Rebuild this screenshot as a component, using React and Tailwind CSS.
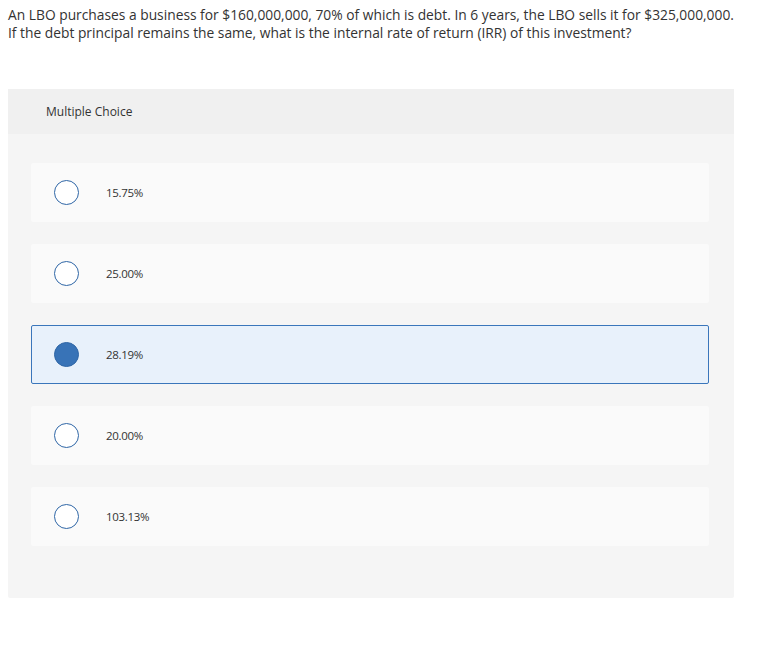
import React from 'react';

const options = [
  { label: '15.75%', selected: false },
  { label: '25.00%', selected: false },
  { label: '28.19%', selected: true },
  { label: '20.00%', selected: false },
  { label: '103.13%', selected: false },
];

function Option({ label, selected }) {
  return (
    <div
      className={
        selected
          ? 'flex items-center h-[59px] rounded-[2px] border border-[#3a76bb] bg-[#e8f1fb]'
          : 'flex items-center h-[59px] rounded-[2px] border border-transparent bg-[#fafafa]'
      }
    >
      {/* Radio */}
      {selected ? (
        <span className="ml-[22px] shrink-0 block w-[25px] h-[25px] rounded-full bg-[#3873b7] border-[1.5px] border-[#2f66a6]" />
      ) : (
        <span className="ml-[22px] shrink-0 block w-[25px] h-[25px] rounded-full bg-white border-[1.5px] border-[#2f66a6]" />
      )}
      <span className="ml-[27px] text-[11.5px] text-[#333] tracking-[-0.3px]">{label}</span>
    </div>
  );
}

export default function App() {
  return (
    <div className="w-[776px] h-[650px] bg-white font-['Open_Sans',sans-serif] text-[#333]">
      {/* Question */}
      <p className="pl-2 pt-[6px] text-[13.8px] leading-[18px] text-[#333]">
        An LBO purchases a business for $160,000,000, 70% of which is debt. In 6 years, the LBO sells it for $325,000,000.
        <br />
        If the debt principal remains the same, what is the internal rate of return (IRR) of this investment?
      </p>

      {/* Answer panel */}
      <div className="ml-2 mt-[47px] w-[726px] h-[509px] bg-[#f5f5f5] rounded-[2px]">
        <div className="h-[45px] bg-[#f0f0f0] flex items-center pl-[38px] text-[12px] text-[#333]">
          Multiple Choice
        </div>
        <div className="pl-[23px] pr-[25px] pt-[29px] flex flex-col gap-[22px]">
          {options.map((o) => (
            <Option key={o.label} {...o} />
          ))}
        </div>
      </div>
    </div>
  );
}
